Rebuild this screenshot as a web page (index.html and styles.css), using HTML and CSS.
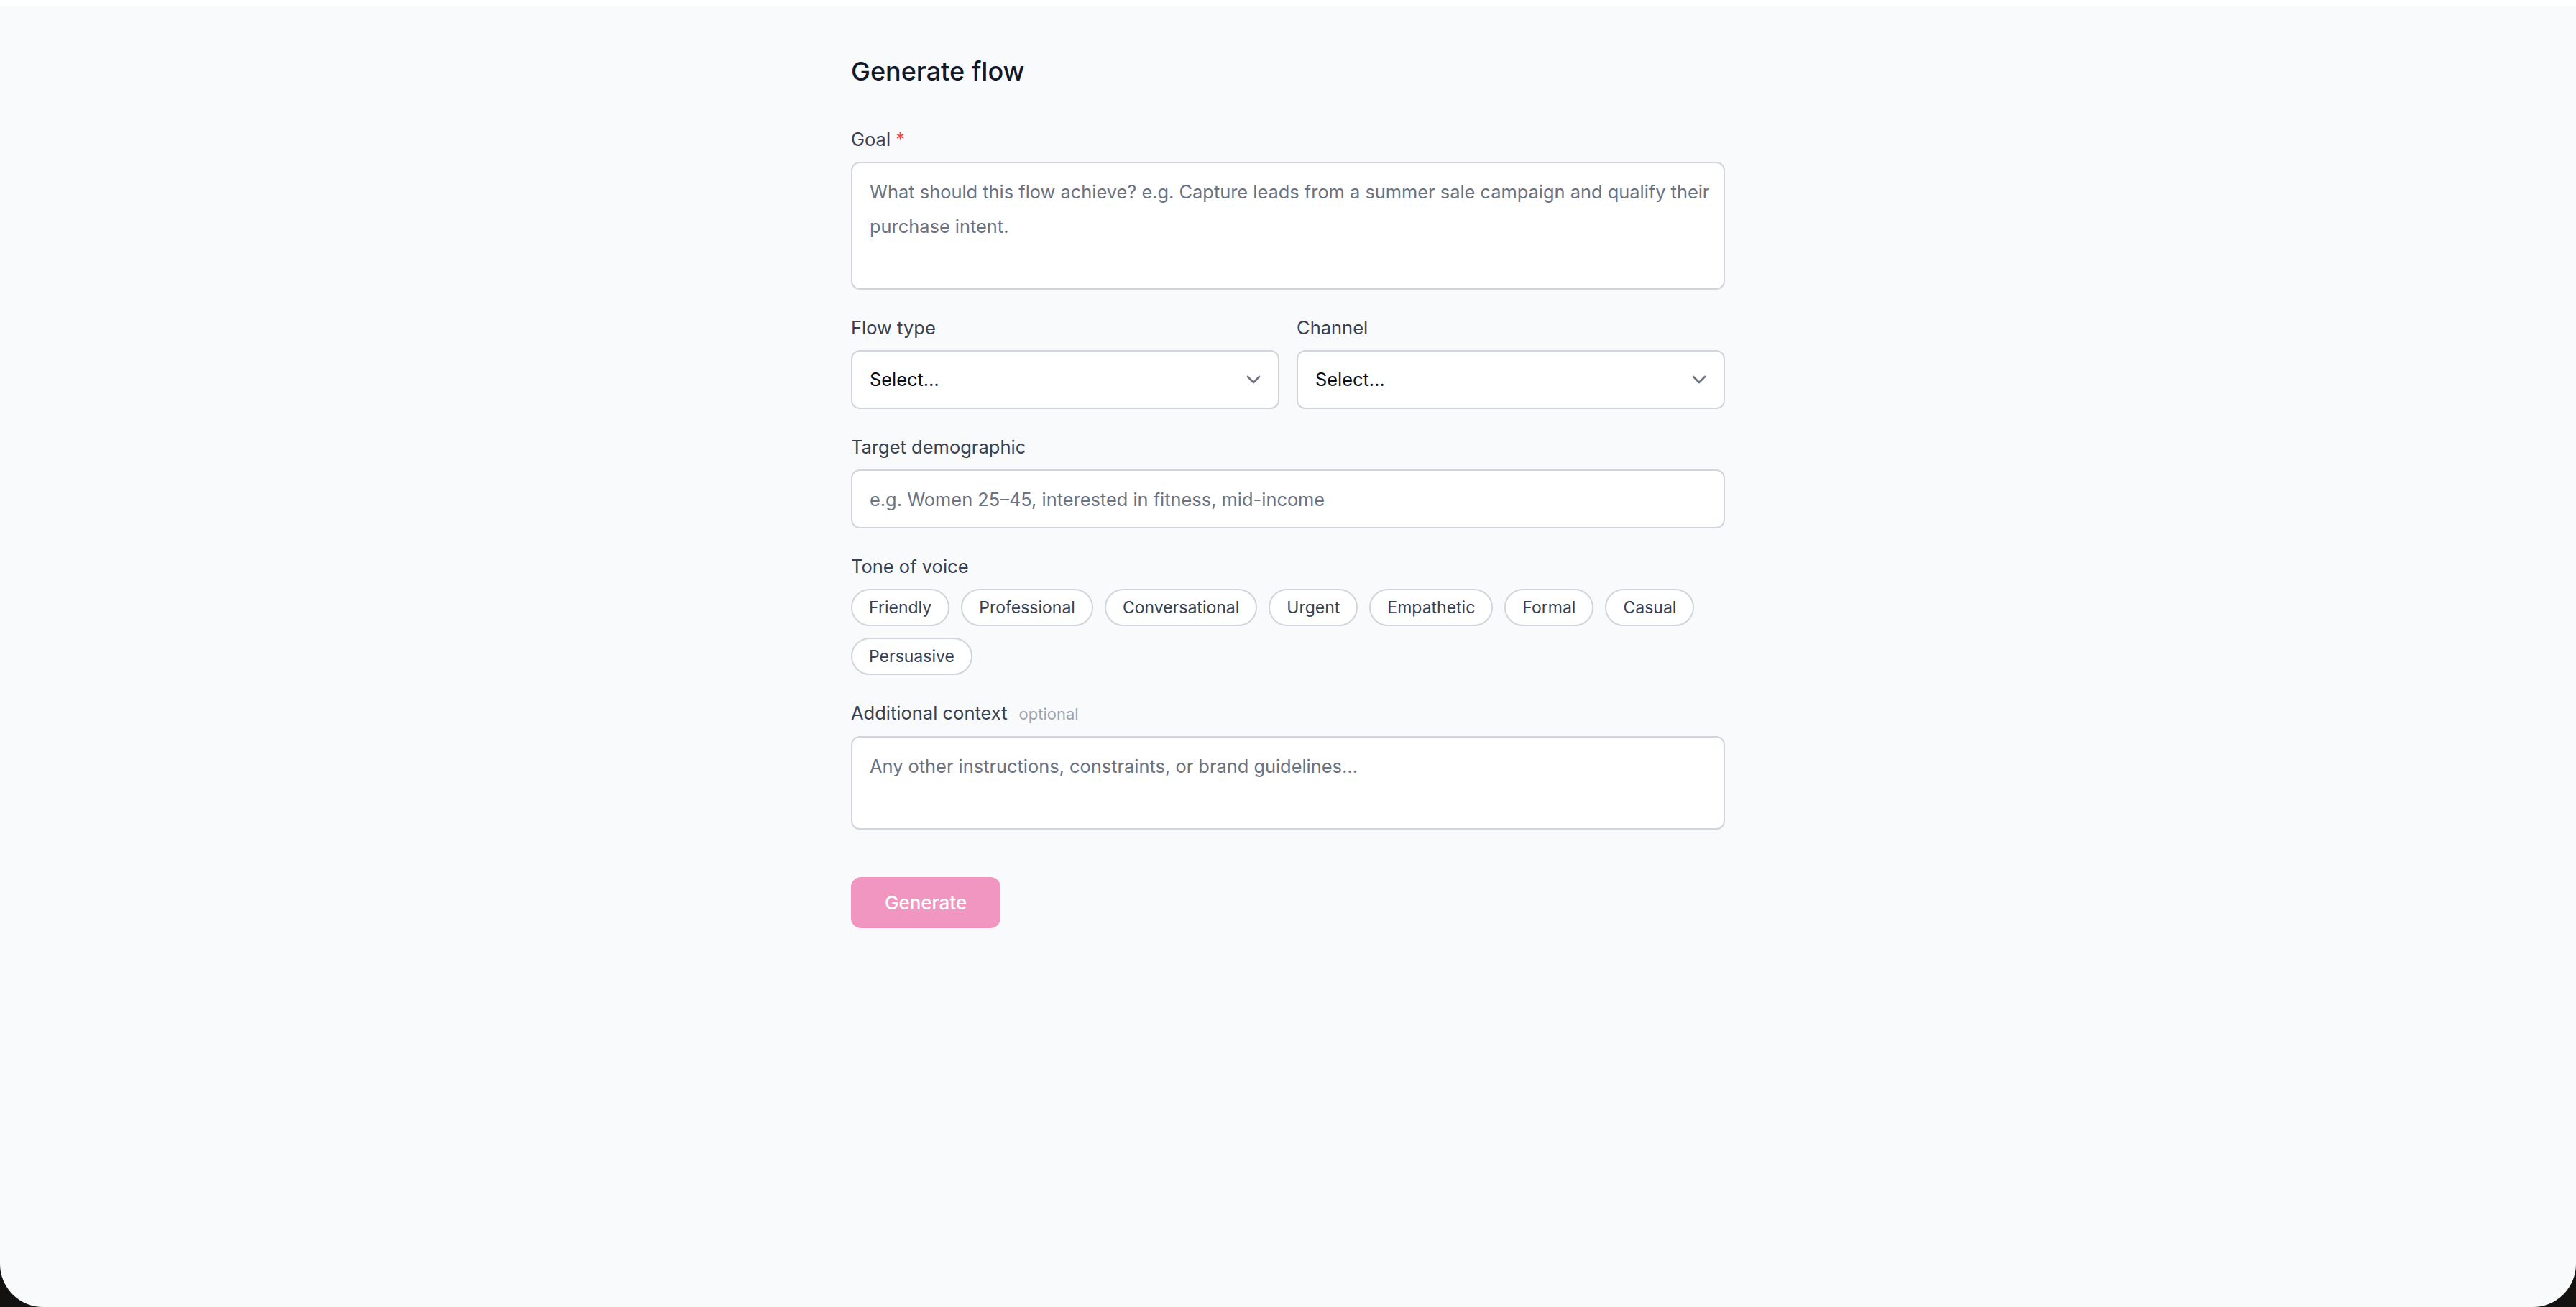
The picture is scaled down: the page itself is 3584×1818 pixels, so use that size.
FILE: index.html
```html
<!DOCTYPE html>
<html lang="en">
<head>
<meta charset="utf-8">
<title>Generate flow</title>
<link rel="stylesheet" href="styles.css">
</head>
<body>
<div class="window">
  <main class="form">
    <h1 class="title">Generate flow</h1>
    <div class="fields">
      <div class="field">
        <label class="label">Goal <span class="req">*</span></label>
        <textarea class="control goal" placeholder="What should this flow achieve? e.g. Capture leads from a summer sale campaign and qualify their purchase intent."></textarea>
      </div>
      <div class="row">
        <div class="field">
          <label class="label">Flow type</label>
          <div class="control select">
            <span>Select…</span>
            <svg class="chev" viewBox="0 0 24 24" width="32" height="32" fill="none" stroke="#6b7280" stroke-width="2" stroke-linecap="round" stroke-linejoin="round"><path d="m6 9 6 6 6-6"/></svg>
          </div>
        </div>
        <div class="field">
          <label class="label">Channel</label>
          <div class="control select">
            <span>Select…</span>
            <svg class="chev" viewBox="0 0 24 24" width="32" height="32" fill="none" stroke="#6b7280" stroke-width="2" stroke-linecap="round" stroke-linejoin="round"><path d="m6 9 6 6 6-6"/></svg>
          </div>
        </div>
      </div>
      <div class="field">
        <label class="label">Target demographic</label>
        <input class="control input" type="text" placeholder="e.g. Women 25–45, interested in fitness, mid-income">
      </div>
      <div class="field">
        <label class="label">Tone of voice</label>
        <div class="chips">
          <button class="chip">Friendly</button>
          <button class="chip">Professional</button>
          <button class="chip">Conversational</button>
          <button class="chip">Urgent</button>
          <button class="chip">Empathetic</button>
          <button class="chip">Formal</button>
          <button class="chip">Casual</button>
          <button class="chip">Persuasive</button>
        </div>
      </div>
      <div class="field">
        <div class="label-row">
          <label class="label">Additional context</label>
          <span class="optional">optional</span>
        </div>
        <textarea class="control extra" placeholder="Any other instructions, constraints, or brand guidelines…"></textarea>
      </div>
    </div>
    <button class="generate">Generate</button>
  </main>
</div>
</body>
</html>
```

FILE: styles.css
```css
html, body {
  margin: 0;
  padding: 0;
  background: #141211;
}

.window {
  height: 1818px;
  box-sizing: border-box;
  background: #f9fafb;
  border-top: 8px solid #ffffff;
  border-radius: 0 0 60px 60px;
  display: flex;
  justify-content: center;
  font-family: Inter, "Noto Sans", "Liberation Sans", sans-serif;
}

.form {
  width: 1216px;
  padding-top: 67px;
}

.title {
  margin: 0 0 51px;
  font-size: 36px;
  line-height: 48px;
  font-weight: 500;
  color: #111827;
}

.fields {
  display: flex;
  flex-direction: column;
  gap: 33px;
}

.field {
  display: flex;
  flex-direction: column;
  gap: 11px;
  min-width: 0;
}

.row {
  display: grid;
  grid-template-columns: 1fr 1fr;
  gap: 24px;
}

.label {
  font-size: 25.5px;
  line-height: 40px;
  font-weight: 400;
  color: #374151;
}

.req {
  color: #ef4444;
}

.label-row {
  display: flex;
  align-items: baseline;
  gap: 16px;
}

.optional {
  font-size: 22px;
  line-height: 40px;
  color: #9ca3af;
}

.control {
  box-sizing: border-box;
  width: 100%;
  margin: 0;
  border: 2px solid #d1d5db;
  border-radius: 12px;
  background: #ffffff;
  font-family: Inter, "Noto Sans", "Liberation Sans", sans-serif;
  font-size: 25.4px;
  line-height: 48px;
  color: #111827;
  outline: none;
}

.control::placeholder {
  color: #6b7280;
  opacity: 1;
}

textarea.control {
  display: block;
  resize: none;
  padding: 16px 8px 16px 24px;
}

.goal {
  height: 178px;
}

.extra {
  height: 130px;
}

.input {
  height: 82px;
  padding: 0 24px;
}

.select {
  height: 82px;
  display: flex;
  align-items: center;
  justify-content: space-between;
  padding: 0 18px 0 24px;
  color: #0b0f19;
}

.chev {
  display: block;
}

.chips {
  display: flex;
  flex-wrap: wrap;
  gap: 16px;
}

.chip {
  box-sizing: border-box;
  height: 52px;
  margin: 0;
  padding: 0 23px;
  border: 2px solid #d1d5db;
  border-radius: 999px;
  background: #ffffff;
  font-family: Inter, "Noto Sans", "Liberation Sans", sans-serif;
  font-size: 23px;
  line-height: 32px;
  color: #374151;
}

.generate {
  margin-top: 66px;
  height: 71px;
  padding: 0 47px;
  border: 0;
  border-radius: 14px;
  background: #f196c0;
  color: #ffffff;
  font-family: Inter, "Noto Sans", "Liberation Sans", sans-serif;
  font-size: 26px;
  font-weight: 500;
}
```
